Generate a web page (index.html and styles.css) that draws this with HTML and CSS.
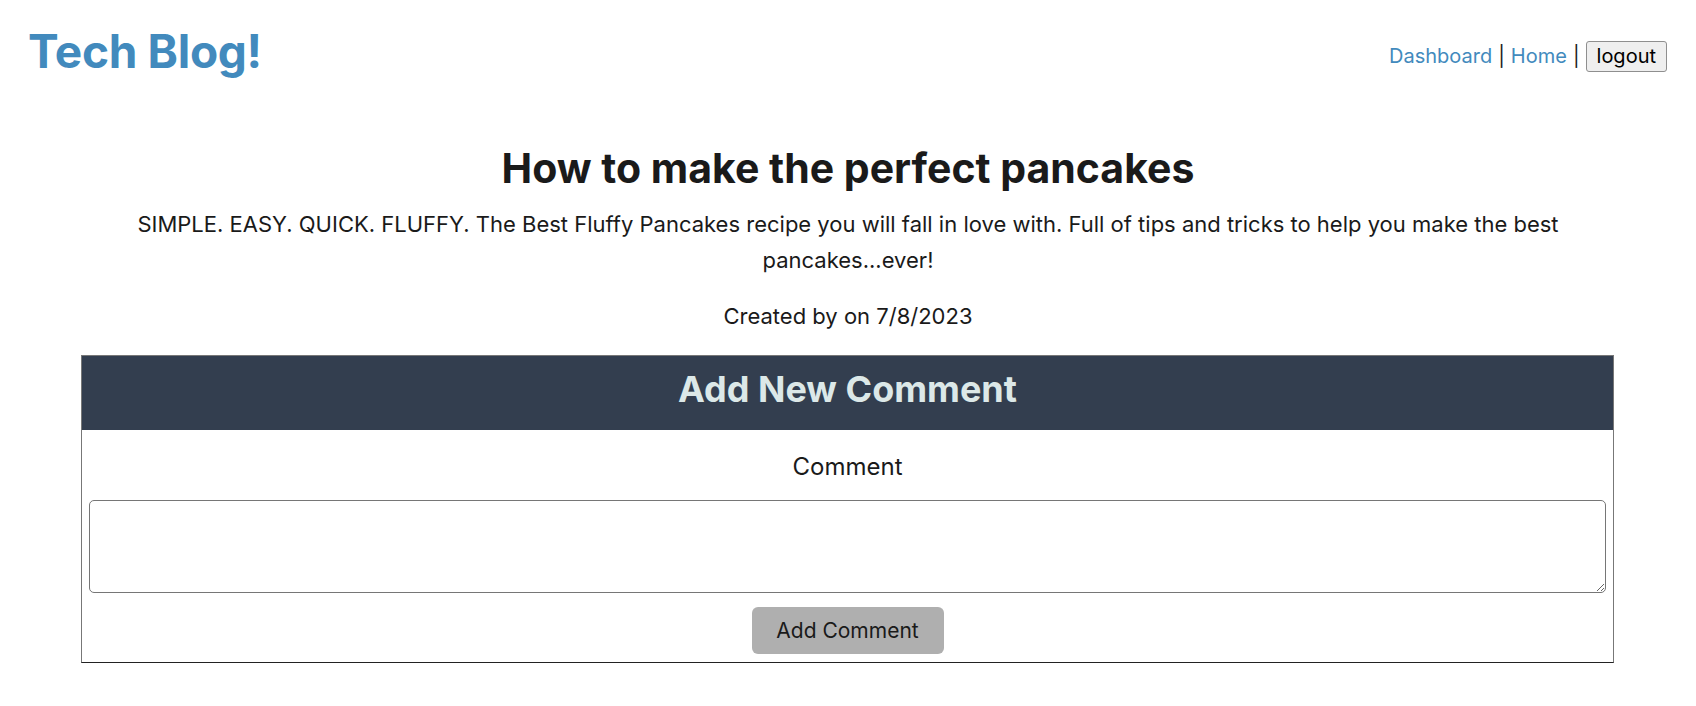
FILE: index.html
```html
<!DOCTYPE html>
<html lang="en">
<head>
<meta charset="utf-8">
<title>Tech Blog!</title>
<link rel="stylesheet" href="styles.css">
</head>
<body>
<header class="site-header">
  <h1 class="brand">Tech Blog!</h1>
  <nav class="nav">
    <a class="nav-link" href="#">Dashboard</a><span class="sep">|</span><a class="nav-link" href="#">Home</a><span class="sep">|</span><button class="logout" type="button">logout</button>
  </nav>
</header>
<main class="post">
  <h2 class="post-title">How to make the perfect pancakes</h2>
  <p class="post-body">SIMPLE. EASY. QUICK. FLUFFY. The Best Fluffy Pancakes recipe you will fall in love with. Full of tips and tricks to help you make the best pancakes...ever!</p>
  <p class="post-meta">Created by on 7/8/2023</p>
</main>
<section class="comment-card">
  <h3 class="card-head">Add New Comment</h3>
  <form class="comment-form">
    <label class="comment-label" for="comment">Comment</label>
    <textarea class="comment-input" id="comment"></textarea>
    <button class="comment-submit" type="button">Add Comment</button>
  </form>
</section>
</body>
</html>
```

FILE: styles.css
```css
* { box-sizing: border-box; }

body {
  margin: 0;
  font-family: Inter, "Noto Sans", sans-serif;
  color: #1a1a1a;
  background: #fff;
}

.site-header {
  display: flex;
  justify-content: space-between;
  align-items: flex-start;
  padding: 22px 29px 0 28px;
}

.brand {
  margin: 0;
  font-size: 46px;
  line-height: 58px;
  letter-spacing: -0.3px;
  font-weight: 700;
  color: #428abd;
}

.nav {
  display: flex;
  align-items: center;
  gap: 6px;
  margin-top: 19px;
  font-size: 20px;
  line-height: 31px;
}

.nav-link {
  color: #428abd;
  text-decoration: none;
}

.sep { color: #1a1a1a; }

.logout {
  font-family: inherit;
  font-size: 20px;
  line-height: 25px;
  padding: 2px 10px;
  border: 1px solid #8f8f8f;
  border-radius: 3px;
  background: #efefef;
  color: #000;
}

.post {
  text-align: center;
  padding: 64px 100px 0;
}

.post-title {
  margin: 0;
  font-size: 41px;
  line-height: 48px;
  font-weight: 700;
}

.post-body {
  margin: 14px 0 0;
  font-size: 22px;
  line-height: 36px;
}

.post-meta {
  margin: 20px 0 0;
  font-size: 22px;
  line-height: 36px;
}

.comment-card {
  margin: 21px 82px 0 81px;
  border: 1px solid #777;
  border-bottom-color: #222;
}

.card-head {
  margin: 0;
  padding: 11px 0 19px;
  background: #333e4f;
  color: #dce8e8;
  text-align: center;
  font-size: 36px;
  line-height: 44px;
  font-weight: 700;
}

.comment-form {
  display: flex;
  flex-direction: column;
  align-items: center;
  padding: 23px 7px 8px;
}

.comment-label {
  font-size: 24px;
  line-height: 28px;
}

.comment-input {
  width: 100%;
  height: 93px;
  margin-top: 19px;
  border: 1px solid #767676;
  border-radius: 5px;
  font-family: inherit;
  font-size: 16px;
  resize: vertical;
}

.comment-submit {
  margin-top: 14px;
  width: 192px;
  height: 47px;
  border: none;
  border-radius: 6px;
  background: #afafaf;
  color: #1a1a1a;
  font-family: inherit;
  font-size: 21px;
}
```
